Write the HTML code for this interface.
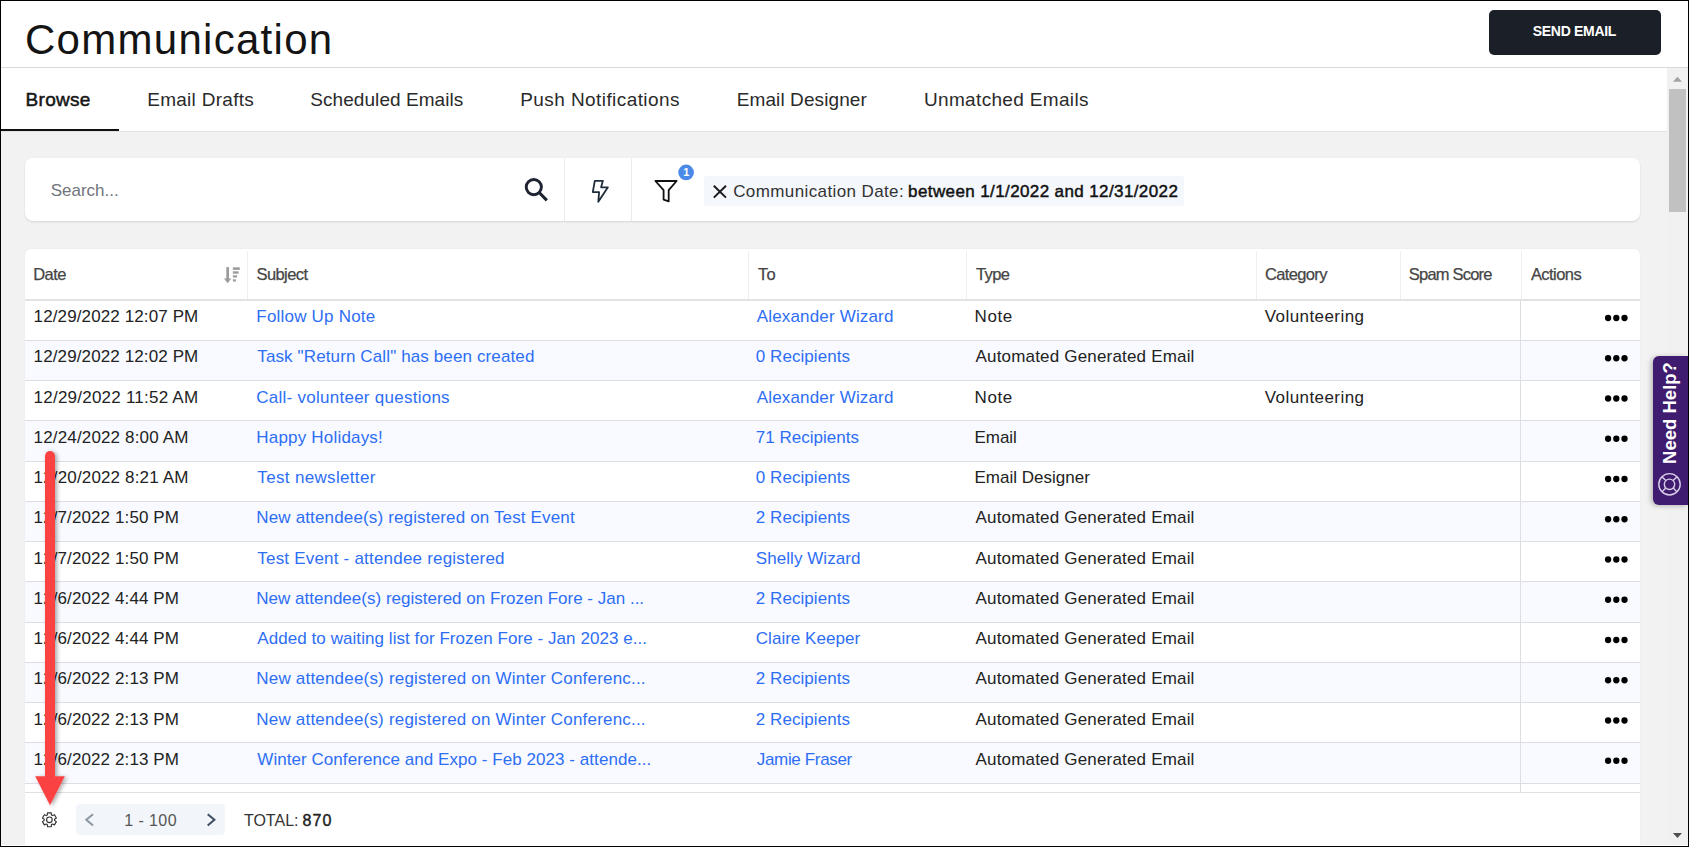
<!DOCTYPE html>
<html><head><meta charset="utf-8"><style>
html,body{margin:0;padding:0;}
body{width:1689px;height:847px;overflow:hidden;position:relative;background:#fff;font-family:"Liberation Sans",sans-serif;}
.t{position:absolute;white-space:nowrap;}
</style></head><body>
<div style="position:absolute;left:1px;top:1px;width:1687px;height:66px;background:#fff;"></div>
<div style="position:absolute;left:1px;top:67px;width:1687px;height:1px;background:#d9d9d9;"></div>
<div class="t" style="left:25.00px;top:18.55px;font-size:42px;line-height:42px;color:#141414;font-weight:400;letter-spacing:1.283px;">Communication</div>
<div style="position:absolute;left:1489px;top:10px;width:172px;height:45px;background:#1b1f27;border-radius:5px"></div>
<div class="t" style="left:1532.80px;top:24.25px;font-size:14px;line-height:14px;color:#fff;font-weight:700;letter-spacing:-0.311px;">SEND EMAIL</div>
<div style="position:absolute;left:1px;top:68px;width:1666px;height:63px;background:#fff;"></div>
<div style="position:absolute;left:1px;top:131px;width:1666px;height:1px;background:#e2e2e2;"></div>
<div style="position:absolute;left:1px;top:129px;width:118px;height:2px;background:#111;"></div>
<div class="t" style="left:25.60px;top:89.92px;font-size:19px;line-height:19px;color:#151515;font-weight:400;letter-spacing:0.28px;-webkit-text-stroke:0.5px #151515;">Browse</div>
<div class="t" style="left:147.20px;top:89.92px;font-size:19px;line-height:19px;color:#2a2a2a;font-weight:400;letter-spacing:0.282px;">Email Drafts</div>
<div class="t" style="left:310.30px;top:89.92px;font-size:19px;line-height:19px;color:#2a2a2a;font-weight:400;letter-spacing:0.06px;">Scheduled Emails</div>
<div class="t" style="left:520.20px;top:89.92px;font-size:19px;line-height:19px;color:#2a2a2a;font-weight:400;letter-spacing:0.424px;">Push Notifications</div>
<div class="t" style="left:736.70px;top:89.92px;font-size:19px;line-height:19px;color:#2a2a2a;font-weight:400;letter-spacing:0.1px;">Email Designer</div>
<div class="t" style="left:924.00px;top:89.92px;font-size:19px;line-height:19px;color:#2a2a2a;font-weight:400;letter-spacing:0.333px;">Unmatched Emails</div>
<div style="position:absolute;left:1px;top:132px;width:1666px;height:713px;background:#f2f2f2;"></div>
<div style="position:absolute;left:25px;top:158px;width:1615px;height:63px;background:#fff;border-radius:8px;box-shadow:0 1px 2px rgba(0,0,0,0.12)"></div>
<div class="t" style="left:50.80px;top:182.11px;font-size:17px;line-height:17px;color:#70747b;font-weight:400;letter-spacing:-0.025px;">Search...</div>
<div style="position:absolute;left:564px;top:158px;width:1px;height:63px;background:#e9ebee;"></div>
<div style="position:absolute;left:631px;top:158px;width:1px;height:63px;background:#e9ebee;"></div>
<svg style="position:absolute;left:0;top:0" width="1689" height="847" viewBox="0 0 1689 847"><circle cx="533.8" cy="187.1" r="7.6" fill="none" stroke="#1d2330" stroke-width="2.9"/><line x1="539.5" y1="192.8" x2="545.8" y2="199.3" stroke="#1d2330" stroke-width="3" stroke-linecap="square"/><path d="M594.8 180.8 L602.9 180.8 L601.1 187.3 L607.9 187.3 L598.3 201.7 L599.1 192.1 L592.8 192.1 Z" fill="none" stroke="#1f2d3d" stroke-width="1.8" stroke-linejoin="round"/><path d="M655.4 181 L676.6 181 L668.7 190.1 L668.7 201.3 L663.6 199.6 L663.6 190.1 Z" fill="none" stroke="#111" stroke-width="1.8" stroke-linejoin="round"/><circle cx="686.1" cy="172.4" r="7.8" fill="#4a89e8"/></svg>
<div class="t" style="left:683.20px;top:167.49px;font-size:11px;line-height:11px;color:#fff;font-weight:700;letter-spacing:0px;">1</div>
<div style="position:absolute;left:704px;top:176px;width:480px;height:30px;background:#f4f7fc;border-radius:3px"></div>
<svg style="position:absolute;left:0;top:0" width="1689" height="847" viewBox="0 0 1689 847"><path d="M713.8 185.8 L726 197.6 M726 185.8 L713.8 197.6" stroke="#1a1a1a" stroke-width="2" fill="none"/></svg>
<div class="t" style="left:733.20px;top:183.21px;font-size:17px;line-height:17px;color:#333;font-weight:400;letter-spacing:0.389px;">Communication Date:</div>
<div class="t" style="left:908.10px;top:183.21px;font-size:17px;line-height:17px;color:#111;font-weight:400;letter-spacing:0.39px;-webkit-text-stroke:0.45px #111;">between 1/1/2022 and 12/31/2022</div>
<div style="position:absolute;left:25px;top:249px;width:1615px;height:597px;background:#fff;border-radius:6px 6px 0 0;box-shadow:0 0 2px rgba(0,0,0,0.05)"></div>
<div style="position:absolute;left:25px;top:299px;width:1615px;height:2px;background:#e2e2e2;"></div>
<div style="position:absolute;left:247px;top:251px;width:1px;height:48px;background:#efefef;"></div>
<div style="position:absolute;left:748px;top:251px;width:1px;height:48px;background:#efefef;"></div>
<div style="position:absolute;left:966px;top:251px;width:1px;height:48px;background:#efefef;"></div>
<div style="position:absolute;left:1256px;top:251px;width:1px;height:48px;background:#efefef;"></div>
<div style="position:absolute;left:1400px;top:251px;width:1px;height:48px;background:#efefef;"></div>
<div style="position:absolute;left:1521px;top:251px;width:1px;height:48px;background:#efefef;"></div>
<div class="t" style="left:33.20px;top:266.33px;font-size:16.5px;line-height:16.5px;color:#454545;font-weight:400;letter-spacing:-0.567px;-webkit-text-stroke:0.25px #454545;">Date</div>
<div class="t" style="left:256.50px;top:266.33px;font-size:16.5px;line-height:16.5px;color:#454545;font-weight:400;letter-spacing:-0.583px;-webkit-text-stroke:0.25px #454545;">Subject</div>
<div class="t" style="left:758.00px;top:266.33px;font-size:16.5px;line-height:16.5px;color:#454545;font-weight:400;letter-spacing:0.3px;-webkit-text-stroke:0.25px #454545;">To</div>
<div class="t" style="left:976.00px;top:266.33px;font-size:16.5px;line-height:16.5px;color:#454545;font-weight:400;letter-spacing:-0.6px;-webkit-text-stroke:0.25px #454545;">Type</div>
<div class="t" style="left:1265.00px;top:266.33px;font-size:16.5px;line-height:16.5px;color:#454545;font-weight:400;letter-spacing:-0.643px;-webkit-text-stroke:0.25px #454545;">Category</div>
<div class="t" style="left:1408.80px;top:266.33px;font-size:16.5px;line-height:16.5px;color:#454545;font-weight:400;letter-spacing:-0.789px;-webkit-text-stroke:0.25px #454545;">Spam Score</div>
<div class="t" style="left:1530.90px;top:266.33px;font-size:16.5px;line-height:16.5px;color:#454545;font-weight:400;letter-spacing:-0.55px;-webkit-text-stroke:0.25px #454545;">Actions</div>
<svg fill="#9c9c9c" style="position:absolute;left:0;top:0" width="1689" height="847" viewBox="0 0 1689 847"><rect x="226.3" y="267.1" width="2.7" height="12.5"/><path d="M224 278.6 L231.3 278.6 L227.65 283.2 Z"/><rect x="232.9" y="267.3" width="6.9" height="2.6"/><rect x="232.9" y="271.3" width="5.7" height="2.4"/><rect x="232.9" y="275.3" width="4.2" height="2.2"/><rect x="232.9" y="279.3" width="3.0" height="2.2"/></svg>
<div style="position:absolute;left:25px;top:301px;width:1615px;height:491px;overflow:hidden">
<div style="position:absolute;left:0px;top:0px;width:1615px;height:39px;background:#fff;"></div>
<div style="position:absolute;left:0px;top:39px;width:1615px;height:1px;background:#dcdee3;"></div>
<div style="position:absolute;left:0px;top:40px;width:1615px;height:39px;background:#f8faff;"></div>
<div style="position:absolute;left:0px;top:79px;width:1615px;height:1px;background:#dcdee3;"></div>
<div style="position:absolute;left:0px;top:80px;width:1615px;height:39px;background:#fff;"></div>
<div style="position:absolute;left:0px;top:119px;width:1615px;height:1px;background:#dcdee3;"></div>
<div style="position:absolute;left:0px;top:120px;width:1615px;height:40px;background:#f8faff;"></div>
<div style="position:absolute;left:0px;top:160px;width:1615px;height:1px;background:#dcdee3;"></div>
<div style="position:absolute;left:0px;top:161px;width:1615px;height:39px;background:#fff;"></div>
<div style="position:absolute;left:0px;top:200px;width:1615px;height:1px;background:#dcdee3;"></div>
<div style="position:absolute;left:0px;top:201px;width:1615px;height:39px;background:#f8faff;"></div>
<div style="position:absolute;left:0px;top:240px;width:1615px;height:1px;background:#dcdee3;"></div>
<div style="position:absolute;left:0px;top:241px;width:1615px;height:39px;background:#fff;"></div>
<div style="position:absolute;left:0px;top:280px;width:1615px;height:1px;background:#dcdee3;"></div>
<div style="position:absolute;left:0px;top:281px;width:1615px;height:40px;background:#f8faff;"></div>
<div style="position:absolute;left:0px;top:321px;width:1615px;height:1px;background:#dcdee3;"></div>
<div style="position:absolute;left:0px;top:322px;width:1615px;height:39px;background:#fff;"></div>
<div style="position:absolute;left:0px;top:361px;width:1615px;height:1px;background:#dcdee3;"></div>
<div style="position:absolute;left:0px;top:362px;width:1615px;height:39px;background:#f8faff;"></div>
<div style="position:absolute;left:0px;top:401px;width:1615px;height:1px;background:#dcdee3;"></div>
<div style="position:absolute;left:0px;top:402px;width:1615px;height:39px;background:#fff;"></div>
<div style="position:absolute;left:0px;top:441px;width:1615px;height:1px;background:#dcdee3;"></div>
<div style="position:absolute;left:0px;top:442px;width:1615px;height:40px;background:#f8faff;"></div>
<div style="position:absolute;left:0px;top:482px;width:1615px;height:1px;background:#dcdee3;"></div>
<div style="position:absolute;left:0px;top:483px;width:1615px;height:39px;background:#fff;"></div>
<div style="position:absolute;left:0px;top:522px;width:1615px;height:1px;background:#dcdee3;"></div>
<div class="t" style="left:8.60px;top:6.61px;font-size:17px;line-height:17px;color:#222;font-weight:400;letter-spacing:0.117px;">12/29/2022 12:07 PM</div>
<div class="t" style="left:231.30px;top:6.61px;font-size:17px;line-height:17px;color:#2d6ef5;font-weight:400;letter-spacing:0.208px;">Follow Up Note</div>
<div class="t" style="left:731.80px;top:6.61px;font-size:17px;line-height:17px;color:#2d6ef5;font-weight:400;letter-spacing:0.16px;">Alexander Wizard</div>
<div class="t" style="left:949.50px;top:6.61px;font-size:17px;line-height:17px;color:#222;font-weight:400;letter-spacing:0.633px;">Note</div>
<div class="t" style="left:1239.70px;top:6.61px;font-size:17px;line-height:17px;color:#222;font-weight:400;letter-spacing:0.436px;">Volunteering</div>
<div class="t" style="left:8.60px;top:46.61px;font-size:17px;line-height:17px;color:#222;font-weight:400;letter-spacing:0.117px;">12/29/2022 12:02 PM</div>
<div class="t" style="left:232.30px;top:46.61px;font-size:17px;line-height:17px;color:#2d6ef5;font-weight:400;letter-spacing:0.124px;">Task &quot;Return Call&quot; has been created</div>
<div class="t" style="left:730.80px;top:46.61px;font-size:17px;line-height:17px;color:#2d6ef5;font-weight:400;letter-spacing:0.055px;">0 Recipients</div>
<div class="t" style="left:950.50px;top:46.61px;font-size:17px;line-height:17px;color:#222;font-weight:400;letter-spacing:0.183px;">Automated Generated Email</div>
<div class="t" style="left:8.60px;top:87.61px;font-size:17px;line-height:17px;color:#222;font-weight:400;letter-spacing:0.228px;">12/29/2022 11:52 AM</div>
<div class="t" style="left:231.30px;top:87.61px;font-size:17px;line-height:17px;color:#2d6ef5;font-weight:400;letter-spacing:0.258px;">Call- volunteer questions</div>
<div class="t" style="left:731.80px;top:87.61px;font-size:17px;line-height:17px;color:#2d6ef5;font-weight:400;letter-spacing:0.16px;">Alexander Wizard</div>
<div class="t" style="left:949.50px;top:87.61px;font-size:17px;line-height:17px;color:#222;font-weight:400;letter-spacing:0.633px;">Note</div>
<div class="t" style="left:1239.70px;top:87.61px;font-size:17px;line-height:17px;color:#222;font-weight:400;letter-spacing:0.436px;">Volunteering</div>
<div class="t" style="left:8.60px;top:127.61px;font-size:17px;line-height:17px;color:#222;font-weight:400;letter-spacing:0.153px;">12/24/2022 8:00 AM</div>
<div class="t" style="left:231.30px;top:127.61px;font-size:17px;line-height:17px;color:#2d6ef5;font-weight:400;letter-spacing:0.193px;">Happy Holidays!</div>
<div class="t" style="left:730.80px;top:127.61px;font-size:17px;line-height:17px;color:#2d6ef5;font-weight:400;letter-spacing:0.008px;">71 Recipients</div>
<div class="t" style="left:949.50px;top:127.61px;font-size:17px;line-height:17px;color:#222;font-weight:400;letter-spacing:-0.05px;">Email</div>
<div class="t" style="left:8.60px;top:167.61px;font-size:17px;line-height:17px;color:#222;font-weight:400;letter-spacing:0.153px;">12/20/2022 8:21 AM</div>
<div class="t" style="left:232.30px;top:167.61px;font-size:17px;line-height:17px;color:#2d6ef5;font-weight:400;letter-spacing:0.336px;">Test newsletter</div>
<div class="t" style="left:730.80px;top:167.61px;font-size:17px;line-height:17px;color:#2d6ef5;font-weight:400;letter-spacing:0.055px;">0 Recipients</div>
<div class="t" style="left:949.50px;top:167.61px;font-size:17px;line-height:17px;color:#222;font-weight:400;letter-spacing:0.008px;">Email Designer</div>
<div class="t" style="left:8.60px;top:207.61px;font-size:17px;line-height:17px;color:#222;font-weight:400;letter-spacing:0.106px;">12/7/2022 1:50 PM</div>
<div class="t" style="left:231.30px;top:207.61px;font-size:17px;line-height:17px;color:#2d6ef5;font-weight:400;letter-spacing:0.151px;">New attendee(s) registered on Test Event</div>
<div class="t" style="left:730.80px;top:207.61px;font-size:17px;line-height:17px;color:#2d6ef5;font-weight:400;letter-spacing:0.055px;">2 Recipients</div>
<div class="t" style="left:950.50px;top:207.61px;font-size:17px;line-height:17px;color:#222;font-weight:400;letter-spacing:0.183px;">Automated Generated Email</div>
<div class="t" style="left:8.60px;top:248.61px;font-size:17px;line-height:17px;color:#222;font-weight:400;letter-spacing:0.106px;">12/7/2022 1:50 PM</div>
<div class="t" style="left:232.30px;top:248.61px;font-size:17px;line-height:17px;color:#2d6ef5;font-weight:400;letter-spacing:0.203px;">Test Event - attendee registered</div>
<div class="t" style="left:730.80px;top:248.61px;font-size:17px;line-height:17px;color:#2d6ef5;font-weight:400;letter-spacing:0.058px;">Shelly Wizard</div>
<div class="t" style="left:950.50px;top:248.61px;font-size:17px;line-height:17px;color:#222;font-weight:400;letter-spacing:0.183px;">Automated Generated Email</div>
<div class="t" style="left:8.60px;top:288.61px;font-size:17px;line-height:17px;color:#222;font-weight:400;letter-spacing:0.106px;">12/6/2022 4:44 PM</div>
<div class="t" style="left:231.30px;top:288.61px;font-size:17px;line-height:17px;color:#2d6ef5;font-weight:400;letter-spacing:0.008px;">New attendee(s) registered on Frozen Fore - Jan ...</div>
<div class="t" style="left:730.80px;top:288.61px;font-size:17px;line-height:17px;color:#2d6ef5;font-weight:400;letter-spacing:0.055px;">2 Recipients</div>
<div class="t" style="left:950.50px;top:288.61px;font-size:17px;line-height:17px;color:#222;font-weight:400;letter-spacing:0.183px;">Automated Generated Email</div>
<div class="t" style="left:8.60px;top:328.61px;font-size:17px;line-height:17px;color:#222;font-weight:400;letter-spacing:0.106px;">12/6/2022 4:44 PM</div>
<div class="t" style="left:232.30px;top:328.61px;font-size:17px;line-height:17px;color:#2d6ef5;font-weight:400;letter-spacing:0.063px;">Added to waiting list for Frozen Fore - Jan 2023 e...</div>
<div class="t" style="left:730.80px;top:328.61px;font-size:17px;line-height:17px;color:#2d6ef5;font-weight:400;letter-spacing:0.025px;">Claire Keeper</div>
<div class="t" style="left:950.50px;top:328.61px;font-size:17px;line-height:17px;color:#222;font-weight:400;letter-spacing:0.183px;">Automated Generated Email</div>
<div class="t" style="left:8.60px;top:368.61px;font-size:17px;line-height:17px;color:#222;font-weight:400;letter-spacing:0.106px;">12/6/2022 2:13 PM</div>
<div class="t" style="left:231.30px;top:368.61px;font-size:17px;line-height:17px;color:#2d6ef5;font-weight:400;letter-spacing:0.196px;">New attendee(s) registered on Winter Conferenc...</div>
<div class="t" style="left:730.80px;top:368.61px;font-size:17px;line-height:17px;color:#2d6ef5;font-weight:400;letter-spacing:0.055px;">2 Recipients</div>
<div class="t" style="left:950.50px;top:368.61px;font-size:17px;line-height:17px;color:#222;font-weight:400;letter-spacing:0.183px;">Automated Generated Email</div>
<div class="t" style="left:8.60px;top:409.61px;font-size:17px;line-height:17px;color:#222;font-weight:400;letter-spacing:0.106px;">12/6/2022 2:13 PM</div>
<div class="t" style="left:231.30px;top:409.61px;font-size:17px;line-height:17px;color:#2d6ef5;font-weight:400;letter-spacing:0.196px;">New attendee(s) registered on Winter Conferenc...</div>
<div class="t" style="left:730.80px;top:409.61px;font-size:17px;line-height:17px;color:#2d6ef5;font-weight:400;letter-spacing:0.055px;">2 Recipients</div>
<div class="t" style="left:950.50px;top:409.61px;font-size:17px;line-height:17px;color:#222;font-weight:400;letter-spacing:0.183px;">Automated Generated Email</div>
<div class="t" style="left:8.60px;top:449.61px;font-size:17px;line-height:17px;color:#222;font-weight:400;letter-spacing:0.106px;">12/6/2022 2:13 PM</div>
<div class="t" style="left:232.30px;top:449.61px;font-size:17px;line-height:17px;color:#2d6ef5;font-weight:400;letter-spacing:0.055px;">Winter Conference and Expo - Feb 2023 - attende...</div>
<div class="t" style="left:731.80px;top:449.61px;font-size:17px;line-height:17px;color:#2d6ef5;font-weight:400;letter-spacing:-0.345px;">Jamie Fraser</div>
<div class="t" style="left:950.50px;top:449.61px;font-size:17px;line-height:17px;color:#222;font-weight:400;letter-spacing:0.183px;">Automated Generated Email</div>
<svg style="position:absolute;left:0;top:0" width="1615" height="491" fill="#000"><circle cx="1583.10" cy="17.00" r="3.15"/><circle cx="1591.30" cy="17.00" r="3.15"/><circle cx="1599.50" cy="17.00" r="3.15"/><circle cx="1583.10" cy="57.25" r="3.15"/><circle cx="1591.30" cy="57.25" r="3.15"/><circle cx="1599.50" cy="57.25" r="3.15"/><circle cx="1583.10" cy="97.50" r="3.15"/><circle cx="1591.30" cy="97.50" r="3.15"/><circle cx="1599.50" cy="97.50" r="3.15"/><circle cx="1583.10" cy="137.75" r="3.15"/><circle cx="1591.30" cy="137.75" r="3.15"/><circle cx="1599.50" cy="137.75" r="3.15"/><circle cx="1583.10" cy="178.00" r="3.15"/><circle cx="1591.30" cy="178.00" r="3.15"/><circle cx="1599.50" cy="178.00" r="3.15"/><circle cx="1583.10" cy="218.25" r="3.15"/><circle cx="1591.30" cy="218.25" r="3.15"/><circle cx="1599.50" cy="218.25" r="3.15"/><circle cx="1583.10" cy="258.50" r="3.15"/><circle cx="1591.30" cy="258.50" r="3.15"/><circle cx="1599.50" cy="258.50" r="3.15"/><circle cx="1583.10" cy="298.75" r="3.15"/><circle cx="1591.30" cy="298.75" r="3.15"/><circle cx="1599.50" cy="298.75" r="3.15"/><circle cx="1583.10" cy="339.00" r="3.15"/><circle cx="1591.30" cy="339.00" r="3.15"/><circle cx="1599.50" cy="339.00" r="3.15"/><circle cx="1583.10" cy="379.25" r="3.15"/><circle cx="1591.30" cy="379.25" r="3.15"/><circle cx="1599.50" cy="379.25" r="3.15"/><circle cx="1583.10" cy="419.50" r="3.15"/><circle cx="1591.30" cy="419.50" r="3.15"/><circle cx="1599.50" cy="419.50" r="3.15"/><circle cx="1583.10" cy="459.75" r="3.15"/><circle cx="1591.30" cy="459.75" r="3.15"/><circle cx="1599.50" cy="459.75" r="3.15"/></svg>
<div style="position:absolute;left:1495px;top:0px;width:1px;height:491px;background:#dcdee3;"></div>
</div>
<div style="position:absolute;left:25px;top:792px;width:1615px;height:1px;background:#e0e0e0;"></div>
<div style="position:absolute;left:25px;top:793px;width:1615px;height:52px;background:#fff;"></div>
<svg style="position:absolute;left:0;top:0" width="1689" height="847" viewBox="0 0 1689 847"><path d="M47.28 815.05 L47.54 812.85 L51.26 812.85 L51.52 815.05 L52.46 815.59 L54.49 814.71 L56.35 817.94 L54.57 819.26 L54.57 820.34 L56.35 821.66 L54.49 824.89 L52.46 824.01 L51.52 824.55 L51.26 826.75 L47.54 826.75 L47.28 824.55 L46.34 824.01 L44.31 824.89 L42.45 821.66 L44.23 820.34 L44.23 819.26 L42.45 817.94 L44.31 814.71 L46.34 815.59 Z" fill="none" stroke="#333" stroke-width="1.15" stroke-linejoin="round"/><circle cx="49.4" cy="819.8" r="2.8" fill="none" stroke="#333" stroke-width="1.15"/></svg>
<div style="position:absolute;left:76px;top:804px;width:149px;height:31px;background:#f2f5f9;border-radius:4px"></div>
<svg style="position:absolute;left:0;top:0" width="1689" height="847" viewBox="0 0 1689 847"><path d="M93 814.2 L86.3 819.8 L93 825.4" fill="none" stroke="#8c96a3" stroke-width="2"/><path d="M207.7 814.2 L214.4 819.8 L207.7 825.4" fill="none" stroke="#3d4d63" stroke-width="2"/></svg>
<div class="t" style="left:124.20px;top:812.96px;font-size:16px;line-height:16px;color:#555;font-weight:400;letter-spacing:0.433px;">1 - 100</div>
<div class="t" style="left:243.90px;top:812.96px;font-size:16px;line-height:16px;color:#333;font-weight:400;letter-spacing:0.02px;">TOTAL:</div>
<div class="t" style="left:302.60px;top:812.96px;font-size:16px;line-height:16px;color:#222;font-weight:400;letter-spacing:1.0px;-webkit-text-stroke:0.45px #222;">870</div>
<div style="position:absolute;left:1667px;top:68px;width:21px;height:777px;background:#f1f1f1;"></div>
<div style="position:absolute;left:1669px;top:89px;width:17px;height:123px;background:#c1c1c1;"></div>
<svg style="position:absolute;left:0;top:0" width="1689" height="847" viewBox="0 0 1689 847"><path d="M1672.9 81.8 L1682 81.8 L1677.45 76.8 Z" fill="#a3a3a3"/><path d="M1672.9 833 L1682 833 L1677.45 838 Z" fill="#505050"/></svg>
<div style="position:absolute;left:1653px;top:356px;width:35px;height:149px;background:#3f1c70;border-radius:6px 0 0 6px;box-shadow:-2px 1px 5px rgba(0,0,0,0.25)"></div>
<div class="t" style="left:1669.5px;top:413px;font-size:18.5px;line-height:18.5px;color:#fff;font-weight:700;transform:translate(-50%,-50%) rotate(-90deg);transform-origin:50% 50%">Need Help?</div>
<svg style="position:absolute;left:0;top:0" width="1689" height="847" viewBox="0 0 1689 847"><g fill="none" stroke="#d9cde9" stroke-width="1.4"><circle cx="1669.5" cy="484.3" r="10.7"/><circle cx="1669.5" cy="484.3" r="5.2"/><path d="M1665.8 480.6 L1661.9 476.7 M1673.2 480.6 L1677.1 476.7 M1665.8 488 L1661.9 491.9 M1673.2 488 L1677.1 491.9"/></g></svg>
<svg style="position:absolute;left:0;top:0" width="1689" height="847" viewBox="0 0 1689 847"><defs><filter id="sh" x="-50%" y="-10%" width="200%" height="120%"><feGaussianBlur in="SourceAlpha" stdDeviation="2"/><feOffset dx="2" dy="1"/><feComponentTransfer><feFuncA type="linear" slope="0.35"/></feComponentTransfer><feMerge><feMergeNode/><feMergeNode in="SourceGraphic"/></feMerge></filter></defs><g filter="url(#sh)" fill="#fb4343"><path d="M45 456 A5 5 0 0 1 55 456 L55 777 L45 777 Z"/><path d="M35.2 776.3 L64.8 776.3 L50 805.2 Z"/></g></svg>
<div style="position:absolute;left:0px;top:845px;width:1689px;height:1px;background:#fff;"></div>
<div style="position:absolute;left:0;top:0;width:1689px;height:847px;box-sizing:border-box;border:1px solid #000"></div>
</body></html>
